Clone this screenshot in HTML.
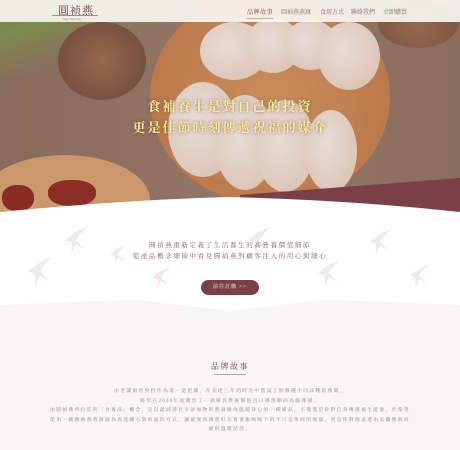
<!DOCTYPE html>
<html><head><meta charset="utf-8"><style>
*{margin:0;padding:0;box-sizing:border-box}
body{width:460px;height:450px;overflow:hidden;background:#f7f6f4;font-family:"Liberation Serif","Noto Serif CJK SC",serif;position:relative}
.hero{position:absolute;left:0;top:0;width:460px;height:215px;background:linear-gradient(90deg,#8a7263,#9a7f6c 50%,#8e7566);overflow:hidden}
.abs{position:absolute}
.nest{position:absolute;background:radial-gradient(ellipse at 40% 40%,#fdf7f0,#efdfd0 70%,#dcc3ad);border-radius:50%}
.sw{position:absolute}
</style></head><body>
<div class="hero">
 <div class="abs" style="left:-40px;top:0;width:220px;height:90px;background:linear-gradient(160deg,#5f8a3a 0%,#7aa24a 30%,transparent 60%);opacity:.8"></div>
 <div class="abs" style="left:150px;top:-10px;width:240px;height:215px;border-radius:50%;background:radial-gradient(circle,#d79a63,#c7824d 80%,#b47044)"></div>
 <div class="abs" style="left:58px;top:22px;width:88px;height:78px;border-radius:50%;background:radial-gradient(circle,#9b6f52,#7d5843 60%,#6d4b39)"></div>
 <div class="abs" style="left:378px;top:0px;width:80px;height:48px;border-radius:50%;background:radial-gradient(circle,#9b6f52,#7d5843)"></div>
 <div class="abs" style="left:-20px;top:155px;width:170px;height:90px;border-radius:50%;background:#d9a774"></div>
 <div class="abs" style="left:2px;top:185px;width:32px;height:26px;border-radius:45%;background:#8a2a22"></div>
 <div class="abs" style="left:48px;top:180px;width:48px;height:26px;border-radius:45%;background:#8c2a22"></div>
 <div class="nest" style="left:200px;top:22px;width:68px;height:58px"></div>
 <div class="nest" style="left:245px;top:18px;width:56px;height:55px"></div>
 <div class="nest" style="left:283px;top:20px;width:55px;height:50px"></div>
 <div class="nest" style="left:318px;top:22px;width:62px;height:68px"></div>
 <div class="nest" style="left:168px;top:82px;width:70px;height:95px"></div>
 <div class="nest" style="left:215px;top:95px;width:60px;height:95px"></div>
 <div class="nest" style="left:255px;top:100px;width:60px;height:92px"></div>
 <div class="nest" style="left:305px;top:110px;width:52px;height:82px"></div>
 <div class="abs" style="left:0;top:0;width:460px;height:215px;background:rgba(120,70,60,.15)"></div>
 <div class="abs" style="left:0;top:96px;width:460px;text-align:center;color:#fbe9a0;font-size:13px;font-weight:bold;letter-spacing:2px;line-height:21px;text-shadow:0 0 3px rgba(80,40,20,.6)">食補養生是對自己的投資<br>更是佳節時刻傳遞祝福的媒介</div>
 <svg class="abs" style="left:0;top:170px" width="460" height="45"><path d="M240 25 L460 8 L460 45 L240 45Z" fill="#7b3f48"/><path d="M0 45 L0 42 Q120 30 230 27 Q350 30 460 42 L460 45Z" fill="#fff"/></svg>
 <div class="abs" style="left:0;top:0;width:460px;height:22px;background:rgba(248,246,242,.92)"></div>
 <div class="abs" style="left:58px;top:2px;color:#7b3f48;font-size:11px;letter-spacing:1px">圓祯燕</div>
 <div class="abs" style="left:52px;top:15px;width:46px;height:1px;background:#b48a90"></div>
 <div class="abs" style="left:62px;top:17px;color:#a07a80;font-size:3px">Yuan Chen Yen</div>
 <div class="abs" style="left:247px;top:7px;font-size:6px;color:#7b3f48;letter-spacing:.5px;border-bottom:1px solid #c9a9ad;padding-bottom:2px">品牌故事</div>
 <div class="abs" style="left:281px;top:7px;font-size:6px;color:#8a6a6e">圓禎燕燕窩</div>
 <div class="abs" style="left:320px;top:7px;font-size:6px;color:#8a6a6e">食用方式</div>
 <div class="abs" style="left:351px;top:7px;font-size:6px;color:#8a6a6e">聯絡我們</div>
 <div class="abs" style="left:383px;top:7px;font-size:6px;color:#8a6a6e">立即購買</div>
</div>
<div class="abs" style="left:0;top:215px;width:460px;height:110px;background:#fff"></div>
<svg class="abs" style="left:0;top:215px" width="460" height="90" fill="#f2eaea">
<defs><path id="s" d="M0 12 Q8 4 20 0 Q12 8 10 12 L18 20 L10 16 L6 24 L6 14Z"/></defs>
<use href="#s" transform="translate(65,12) scale(1.1)"/>
<use href="#s" transform="translate(28,42) scale(1.2)"/>
<use href="#s" transform="translate(110,30) scale(.8)"/>
<use href="#s" transform="translate(152,52) scale(.9)"/>
<use href="#s" transform="translate(248,12) scale(1.1)"/>
<use href="#s" transform="translate(318,45) scale(1.1)"/>
<use href="#s" transform="translate(370,15) scale(1)"/>
<use href="#s" transform="translate(410,50) scale(.9)"/>
</svg>
<svg class="abs" style="left:0;top:300px" width="460" height="35"><path d="M0 5 Q115 0 140 0 L320 0 Q350 0 460 5 L460 35 L0 35Z" fill="#f7f6f4"/><path d="M140 0 L230 11 L320 0Z" fill="#fff"/></svg>
<div class="abs" style="left:0;top:240px;width:460px;text-align:center;color:#8a5d63;font-size:6.5px;letter-spacing:1.6px;line-height:11px">圓禎燕重新定義了生活養生的高營養價值細節<br>從產品概念細節中看見圓禎燕對顧客注入的用心與細心</div>
<div class="abs" style="left:201px;top:280px;width:58px;height:15px;border-radius:8px;background:#7b3f48;color:#fff;font-size:5px;text-align:center;line-height:15px;letter-spacing:1px">前往訂購 &gt;&gt;</div>
<div class="abs" style="left:0;top:361px;width:460px;text-align:center;color:#7b3f48;font-size:8px;letter-spacing:1.5px">品牌故事</div>
<div class="abs" style="left:214px;top:374px;width:32px;height:1px;background:#c9a0a6"></div>
<div class="abs" style="left:50px;top:387px;width:360px;text-align:center;color:#888;font-size:4.8px;letter-spacing:1.3px;line-height:9.5px">由老闆娘的堅持作為第一道把關，在長達三年的時光中嘗試了無數種不同品種的燕窩，<br>終於在2020年底選出了一款極具營養價值且口感滑順的高級燕窩。<br>由圓禎燕所打造的「食養品」概念，是以最純淨且少添加物的燕窩做為溫暖身心的一種補品，不僅僅是針對自身傳遞養生能量，更希望能用一碗圓禎燕燕窩做為表達關心與祝福的方式，讓最愛的親朋好友嘗著飯喝喝下的不只是單純的燕窩，更是你對他表達由衷關懷與祝福的溫暖話語。</div>
</body></html>
